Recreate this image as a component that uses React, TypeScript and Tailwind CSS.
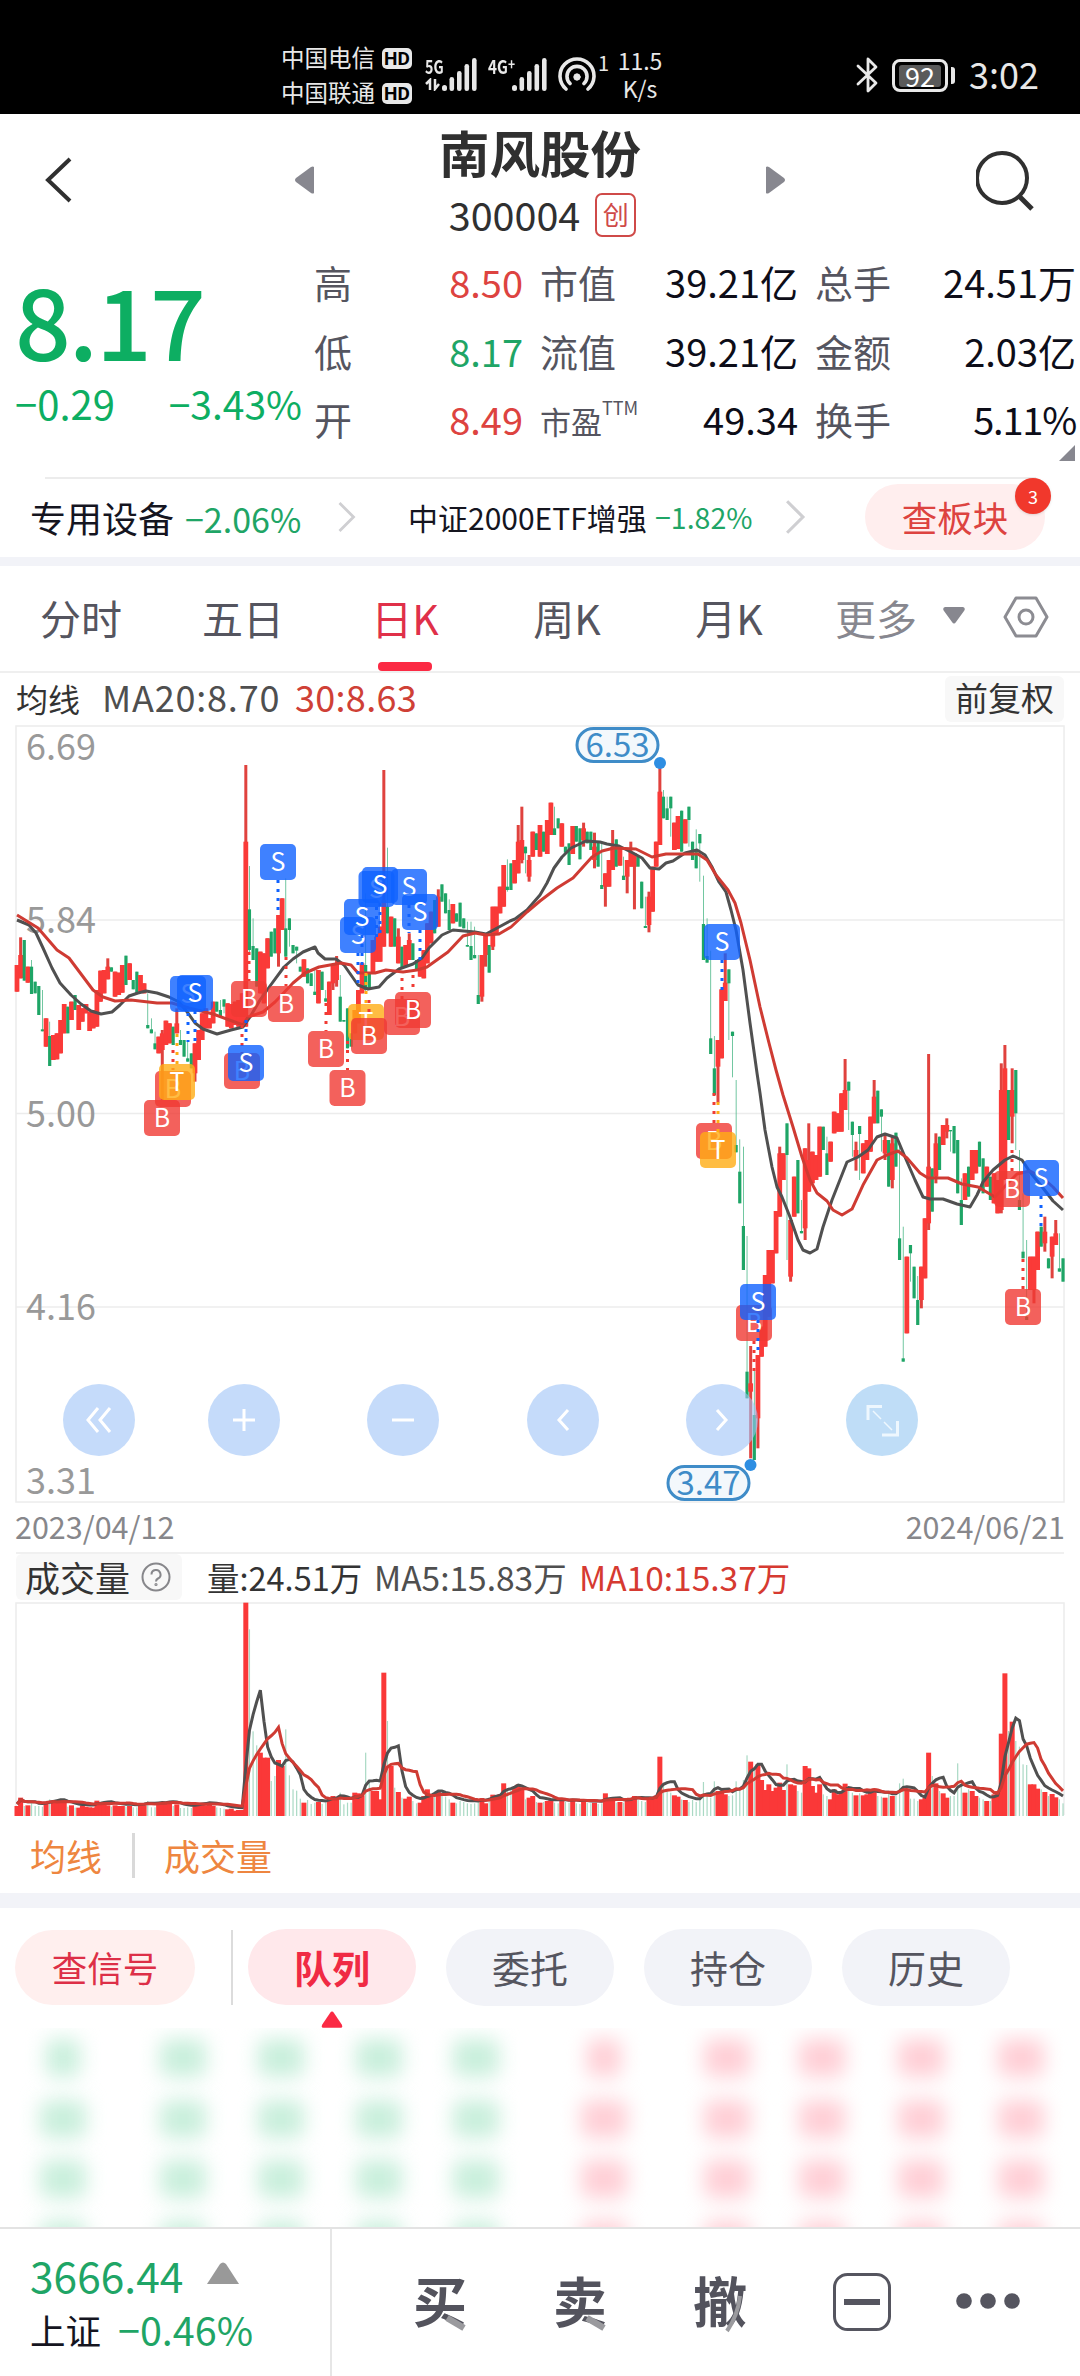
import React from 'react';
import { clsx } from 'clsx';

type Candle = { up: boolean; top: number; bottom: number; high: number; low: number };

// One entry per trading day: colour, body top, body bottom, then optional high and low.
// Values are thirds of a pixel, counted down from 25px above the price panel.
const CANDLE_DATA = `
r795 875,r765 835 712 835,g720 842,r800 848,g800 882 780 882,g845 880,g858 945,g988 994 870 994,r955 1040,g1008 1098 965 1098,
r1005 1080,r1000 1078,r960 1060,r912 1000,g920 1000,r905 960,g885 930,r915 990,r925 965,r912 940,
r935 993,r930 985,r870 980,r812 905,r810 880,r800 838 775 838,g802 815,r815 890,r818 885,r795 878,
g767 855,r790 840,g840 868,g815 880,r825 875,r850 880,g975 985 880 985,g988 1000 955 1000,g1030 1048 995 1048,r1010 1060,
r1000 1050 990 1200,r962 1035,r970 1030,g980 1035,r970 1000 925 1000,g1020 1035 990 1035,g1020 1070,g1075 1085 1020 1085,g1060 1105,r1030 1120 1030 1145,
r990 1080,r940 1020,r925 985,r955 985,r905 970,g905 935,g930 950 900 950,g898 920 898 940,r910 980,r912 985,
r905 975,r900 980,r880 980,r425 980 195 980,g628 750 498 760,g738 780 655 780,g745 860,r755 880,r760 910,r715 805,
g695 770,g685 760,r645 760 645 800,r595 690,g685 770 535 770,g655 690 655 740,g735 760,g740 752 740 790,g800 815,r778 830,
g805 850,g820 858,g875 885 805 885,r810 910,g815 870,g895 905 870 905,r845 945,r795 850 795 870,r790 840 768 860,g890 965 825 965,
g960 965,g925 1045,g1000 1040,r930 1000,r870 970,r790 880,g795 870 580 880,g820 865,r720 820,r710 785,
r680 785,r600 740 210 740,g620 700 443 700,r650 740,g655 740,r710 790 685 790,g740 805,r735 800,r720 780 700 780,g730 780,
g780 810,r780 830,r750 835,r670 790,r635 730,g600 700,r590 680 568 680,g553 605,g580 640,g630 690 598 690,
r612 670,g640 665,g608 680,g655 685,g735 740 665 740,g738 780 665 780,g765 775 680 775,g885 912 765 912,r765 890 765 905,r700 765 700 800,
g735 818,r620 740 620 750,r620 700,r560 640,r495 620,g560 570 478 575,g490 570,r480 550,r425 520 375 520,r420 480 320 490,
g440 460 440 520,r480 530 465 545,r395 470,g400 450,r375 470,g395 455,r360 462,r308 405,g385 405 320 405,g355 385,
r370 440,g440 458,g430 495,r378 462,g378 425,g385 478,r385 420 368 440,g395 430,g395 450,r440 480 398 505,
g425 500,g555 567 425 567,r520 560 520 620,r480 560,r440 510 390 510,g418 500,r440 497,g527 540 470 540,r480 530 480 580,r455 500 425 500,
r460 500 460 628,g470 500,g545 625,g678 684 590 684,r590 675 575 697,r500 635,r425 500,r275 435 195 435,g290 355 270 355,g325 360 290 360,
g290 325 290 410,r368 450,r348 447,g332 455,r358 430,g320 360 320 440,g425 480,g450 505 388 505,g402 430 402 545,g672 780 527 780,
g768 788 655 788,g1015 1062 752 1062,g1105 1185 1008 1185,r1020 1100 1020 1208,r868 1075,r848 903 760 903,g808 850 808 1020,g995 1008 995 1132,g1335 1357 1140 1357,g1415 1510 1318 1510,
g1578 1710 1340 1710,g2015 2095 1608 2095,r2050 2075 1938 2275,g2145 2280 2010 2280,r1965 2155 1965 2245,r1880 1970,r1725 1940,r1650 1850,r1650 1750,r1533 1660,
r1360 1550 1340 1550,r1360 1440,g1270 1365 1270 1680,r1560 1730 1560 1745,r1430 1550,g1380 1540,g1593 1600 1500 1600,r1345 1585 1345 1620,r1380 1475 1270 1475,r1355 1450,
r1365 1440,r1280 1430,g1280 1350,g1360 1425 1310 1425,r1325 1385,r1235 1300,r1240 1295,r1180 1295,r1170 1230 1077 1230,g1145 1172 1145 1290,
g1265 1305 1265 1370,r1350 1375 1325 1412,g1278 1302 1278 1440,r1330 1420,r1320 1380,r1250 1355,r1190 1270 1140 1270,g1172 1270,g1228 1250 1228 1355,r1320 1360 1300 1380,
g1320 1460,r1330 1440 1310 1465,g1298 1400,g1615 1680 1330 1680,g1975 1985 1580 1985,r1670 1900,g1635 1660 1635 1745,g1700 1795,g1800 1875 1728 1875,r1700 1800 1700 1825,
r1555 1735,r1400 1570 1062 1590,g1405 1535,r1330 1430 1300 1450,g1310 1410,r1275 1335,r1275 1295 1255 1315,g1290 1294 1290 1355,g1278 1360,g1320 1480,
g1500 1575 1435 1575,r1420 1500,g1400 1490,r1350 1440,r1350 1420,g1325 1400,g1375 1480,r1400 1460,g1430 1500,r1420 1510,
r1440 1540,r1170 1530 1090 1540,r1105 1440 1035 1440,g1170 1320,r1170 1250 1105 1330,g1110 1240 1110 1350,g1500 1530 1350 1530,g1655 1675 1480 1675,g1850 1860 1620 1860,r1670 1770,
r1670 1770 1670 1810,r1595 1710,g1580 1640,r1595 1630 1550 1655,g1675 1705,r1610 1670 1610 1735,r1600 1635 1560 1635,g1705 1715 1600 1715,g1675 1745`;

const CANDLES: Candle[] = CANDLE_DATA.replace(/\s*\n\s*/g, '')
  .split(',')
  .map((item) => {
    const [top, bottom, high, low] = item.slice(1).split(' ').map((v) => Number(v) / 3 - 25);
    return { up: item[0] === 'r', top, bottom, high: high ?? top, low: low ?? bottom };
  });

const VOLUMES = [
  30, 55, 30, 32, 38, 30, 30, 28, 38, 50, 42, 42, 40, 40, 28, 32, 25, 25, 32, 28,
  26, 25, 46, 38, 38, 32, 28, 32, 30, 30, 28, 30, 26, 26, 32, 32, 45, 26, 26, 38,
  38, 40, 38, 30, 35, 24, 24, 26, 24, 34, 32, 34, 32, 38, 30, 26, 24, 22, 20, 22,
  16, 18, 18, 640, 560, 254, 212, 190, 175, 175, 105, 120, 168, 150, 260, 122, 80, 76, 52, 40,
  48, 36, 40, 42, 36, 40, 55, 60, 50, 70, 35, 40, 40, 70, 68, 62, 190, 105, 75, 75,
  50, 430, 285, 150, 85, 72, 55, 52, 58, 45, 38, 40, 60, 80, 60, 70, 75, 60, 58, 50,
  40, 38, 45, 42, 38, 36, 38, 42, 54, 38, 48, 64, 62, 66, 98, 75, 80, 85, 95, 85,
  50, 55, 60, 42, 40, 42, 45, 48, 40, 38, 45, 42, 40, 45, 38, 36, 42, 40, 38, 40,
  36, 38, 68, 48, 45, 40, 42, 40, 45, 50, 60, 48, 45, 42, 50, 55, 62, 178, 100, 75,
  70, 62, 58, 50, 48, 42, 48, 42, 50, 102, 60, 55, 104, 75, 72, 65, 60, 62, 104, 85,
  108, 182, 163, 140, 155, 108, 78, 95, 75, 85, 100, 78, 155, 95, 92, 75, 70, 150, 143, 90,
  70, 95, 65, 60, 50, 80, 65, 70, 97, 85, 70, 62, 68, 62, 65, 70, 82, 60, 58, 55,
  70, 60, 60, 98, 112, 78, 52, 52, 45, 50, 55, 190, 120, 98, 75, 68, 55, 60, 60, 158,
  100, 70, 80, 75, 60, 55, 50, 45, 45, 65, 75, 247, 428, 255, 283, 225, 208, 155, 153, 95,
  95, 82, 80, 72, 60, 66, 56, 50, 38,
];

const MA20 =
  '17,920 29,925 36,933 43,948 52,968 60,983 71,995 81,1004 91,1011 101,1014 112,1012 120,1005 129,996 138,993 146,991 157,993 169,997 179,1002 188,1013 195,1023 203,1029 217,1034 231,1030 243,1027 250,1017 260,1000 270,986 284,967 293,959 303,952 315,947 318,953 325,959 336,959 344,965 351,975 358,985 368,989 379,987 387,978 399,969 413,964 422,958 429,948 442,935 453,930 475,932 486,934 499,927 510,921 515,919 527,910 540,895 547,883 554,868 562,857 571,848 586,841 600,842 607,844 619,846 633,853 642,858 650,868 659,869 666,863 673,861 685,853 697,850 705,855 712,867 719,882 726,892 731,910 736,930 743,970 750,1023 757,1073 760,1093 765,1130 772,1167 777,1187 782,1197 790,1217 798,1240 803,1250 810,1253 817,1249 823,1227 832,1200 847,1162 858,1157 868,1150 877,1137 885,1134 897,1138 905,1157 915,1180 923,1197 930,1199 943,1199 957,1204 970,1207 977,1195 983,1182 993,1170 1005,1160 1013,1156 1022,1160 1030,1172 1043,1188 1053,1201 1063,1210';

const MA30 =
  '17,915 38,928 57,950 69,958 93,990 103,997 115,1001 131,1000 157,1003 172,1003 189,1008 213,1014 243,1025 248,1017 263,1012 275,1002 293,983 305,973 319,967 341,963 351,965 358,973 375,973 386,970 403,972 417,970 427,967 448,952 463,936 475,933 486,935 499,934 511,927 527,912 540,901 557,888 573,878 592,857 602,851 614,848 636,849 652,857 666,854 678,854 698,854 707,860 716,875 728,890 735,903 741,923 750,960 760,1007 769,1043 776,1070 783,1095 793,1127 802,1157 810,1180 817,1193 827,1201 833,1210 842,1215 852,1209 863,1185 877,1160 887,1155 898,1151 907,1158 920,1173 928,1178 948,1178 962,1184 978,1187 995,1197 1008,1183 1017,1174 1030,1171 1043,1178 1053,1187 1063,1198';

type Marker = { kind: 'B' | 'S' | 'T'; x: number; y: number; from?: number; to?: number };

const MARKERS: Marker[] = [
  { kind: 'B', x: 162, y: 1118 },
  { kind: 'B', x: 173, y: 1089, from: 1050, to: 1070 },
  { kind: 'T', x: 177, y: 1082, from: 1034, to: 1064 },
  { kind: 'S', x: 188, y: 994, from: 1013, to: 1042 },
  { kind: 'S', x: 195, y: 993, from: 1011, to: 1042 },
  { kind: 'B', x: 242, y: 1071, from: 1025, to: 1053 },
  { kind: 'S', x: 246, y: 1063, from: 1020, to: 1045 },
  { kind: 'B', x: 249, y: 999, from: 952, to: 981 },
  { kind: 'S', x: 278, y: 862, from: 880, to: 910 },
  { kind: 'B', x: 286, y: 1004, from: 957, to: 986 },
  { kind: 'B', x: 326, y: 1049, from: 1003, to: 1031 },
  { kind: 'B', x: 347.5, y: 1088, from: 1041, to: 1070 },
  { kind: 'S', x: 358, y: 935, from: 953, to: 985 },
  { kind: 'S', x: 362, y: 917, from: 935, to: 965 },
  { kind: 'T', x: 366, y: 1022, from: 973, to: 1004 },
  { kind: 'B', x: 369, y: 1036, from: 1000, to: 1018 },
  { kind: 'S', x: 376.5, y: 889, from: 907, to: 940 },
  { kind: 'S', x: 409, y: 887, from: 905, to: 933 },
  { kind: 'S', x: 380, y: 885, from: 903, to: 933 },
  { kind: 'S', x: 420, y: 912, from: 930, to: 960 },
  { kind: 'B', x: 402, y: 1017, from: 978, to: 999 },
  { kind: 'B', x: 413, y: 1010, from: 975, to: 992 },
  { kind: 'S', x: 722, y: 942, from: 960, to: 990 },
  { kind: 'B', x: 714, y: 1141, from: 1093, to: 1123 },
  { kind: 'T', x: 718, y: 1150, from: 1102, to: 1132 },
  { kind: 'B', x: 754, y: 1323, from: 1341, to: 1372 },
  { kind: 'S', x: 758, y: 1302, from: 1320, to: 1350 },
  { kind: 'B', x: 1012, y: 1189, from: 1150, to: 1171 },
  { kind: 'B', x: 1023, y: 1307, from: 1259, to: 1289 },
  { kind: 'S', x: 1041, y: 1178, from: 1196, to: 1226 },
];

const MARKER_COLORS = { B: '#f03a33', S: '#0f62ff', T: '#ffad14' };
const RED = '#fa3a38';
const GREEN = '#1ea566';

const candleX = (i: number) => 17 + i * 3.632;

const movingAverage = (days: number) =>
  VOLUMES.map((_, i) => {
    const slice = VOLUMES.slice(Math.max(0, i - days + 1), i + 1);
    const avg = slice.reduce((a, b) => a + b, 0) / slice.length;
    return `${candleX(i)},${213 - (avg + 3) / 3}`;
  }).join(' ');

const SignalBars = () => (
  <svg width="36" height="34" viewBox="0 0 36 34" className="fill-[#e8e8e8]">
    <rect x="0" y="27" width="5" height="6" rx="2.5" />
    <rect x="7.5" y="19" width="4.600" height="14" rx="2.300" />
    <rect x="15" y="13" width="4.600" height="20" rx="2.300" />
    <rect x="22.5" y="6" width="4.600" height="27" rx="2.300" />
    <rect x="30" y="0" width="4.600" height="33" rx="2.300" />
  </svg>
);

const Carrier = ({ name }: { name: string }) => (
  <div className="flex h-[35px] items-center gap-[7px]">
    <span className="-mt-[3px] text-[23.5px] leading-[23px] whitespace-nowrap">{name}</span>
    <span className="flex h-[21px] w-[30px] items-center justify-center rounded-[5px] bg-[#e8e8e8] font-['Roboto',sans-serif] text-[19px] leading-[21px] font-bold text-black">
      HD
    </span>
  </div>
);

const StatusBar = () => (
  <div className="flex h-[114px] bg-black text-[#e8e8e8]">
    <div className="ml-[281px] w-[144px] pt-[41px]">
      <Carrier name="中国电信" />
      <Carrier name="中国联通" />
    </div>
    <div className="flex w-[63px] pt-[58px]">
      <div className="w-[17px]">
        <p className="origin-left scale-x-75 text-[19px] leading-[15px] font-bold">5G</p>
        <svg width="17" height="13" viewBox="0 0 17 13" className="mt-[5px] fill-none stroke-[#e8e8e8]" strokeWidth="2.500">
          <path d="M5 12V2L1 6M10 1v10l4-5" />
        </svg>
      </div>
      <SignalBars />
    </div>
    <div className="flex w-[70px] pt-[58px]">
      <p className="w-[24px] origin-left scale-x-80 text-[19px] leading-[15px] font-bold whitespace-nowrap">
        4G<span className="relative -top-1 text-[15px]">+</span>
      </p>
      <SignalBars />
    </div>
    <svg width="40" height="36" viewBox="0 0 40 36" className="mt-[57px] fill-none stroke-[#e8e8e8]" strokeWidth="3.600" strokeLinecap="round">
      <path d="M8 32a17 17 0 1 1 22 0M12 26.500a10 10 0 1 1 14 0" />
      <circle cx="19" cy="20" r="3.200" className="fill-[#e8e8e8]" strokeWidth="1" />
    </svg>
    <p className="mt-[54px] w-[18px] text-[20px] leading-[18px]">1</p>
    <div className="w-[48px] pt-[46px] text-center text-[23px] leading-[28px]">
      <p>11.5</p>
      <p>K/s</p>
    </div>
    <svg width="24" height="38" viewBox="0 0 24 38" className="mt-[56px] ml-[192px] fill-none stroke-[#e8e8e8]" strokeWidth="2.800" strokeLinejoin="round" strokeLinecap="round">
      <path d="M2 10 20 27l-8 8V3l8 8L2 28" />
    </svg>
    <div className="mt-[59px] ml-[12px] flex h-[33px] w-[56px] items-center justify-center rounded-[8px] border-[3px] border-[#e8e8e8]">
      <span className="flex h-[22px] w-[42px] items-center justify-center rounded-[3px] bg-[#5a5a5a] text-[27px] leading-[22px] text-white">
        92
      </span>
    </div>
    <span className="mt-[67px] ml-[3px] h-[17px] w-[4px] rounded-r-[3px] bg-[#e8e8e8]" />
    <p className="mt-[52px] ml-[14px] text-[36px] leading-[42px]">3:02</p>
  </div>
);

const TitleBar = () => (
  <div className="flex h-[138px] pl-[44px] text-[#303030]">
    <svg width="30" height="46" viewBox="0 0 30 46" className="mt-[43px] fill-none stroke-[#303030]" strokeWidth="4">
      <path d="M26 2 4 23l22 21" />
    </svg>
    <div className="ml-[221px] flex w-[490px] justify-between">
      <svg width="20" height="28" viewBox="0 0 20 28" className="mt-[52px] fill-[#87878f]">
        <path d="M19 1v26q-1 1-3 0L1 16q-2-2 0-4L16 1q2-1 3 0Z" />
      </svg>
      <div className="flex flex-col items-center">
        <h1 className="mt-[7px] text-[50.500px] leading-[60px] font-bold">南风股份</h1>
        <div className="mt-[5px] flex h-[58px] items-center gap-[15px] pl-[5px]">
          <span className="-mt-[3px] text-[39.500px] leading-[50px]">300004</span>
          <span className="flex h-[44px] w-[41px] items-center justify-center rounded-[7px] border-2 border-[#cf4a48] pb-[3px] text-[26px] leading-[30px] text-[#cf4a48]">
            创
          </span>
        </div>
      </div>
      <svg width="20" height="28" viewBox="0 0 20 28" className="mt-[52px] fill-[#87878f]">
        <path d="M1 1v26q1 1 3 0l15-11q2-2 0-4L4 1q-2-1-3 0Z" />
      </svg>
    </div>
    <svg width="60" height="62" viewBox="0 0 60 62" className="mt-[36px] ml-[191px] fill-none stroke-[#303030]" strokeWidth="4">
      <circle cx="26" cy="28" r="25" />
      <path d="m43 46 13 13" strokeWidth="5" />
    </svg>
  </div>
);

const STATS = [
  { a: '高', av: '8.50', up: true, b: '市值', bv: '39.21亿', c: '总手', cv: '24.51万' },
  { a: '低', av: '8.17', up: false, b: '流值', bv: '39.21亿', c: '金额', cv: '2.03亿' },
  { a: '开', av: '8.49', up: true, b: '市盈', bv: '49.34', c: '换手', cv: '5.11%' },
];

const Quote = () => (
  <section className="flex h-[225px]">
    <div className="w-[313px] pl-[15px] text-[#0dae62]">
      <p className="mt-[12px] h-[115px] text-[98px] leading-[108px] font-medium tracking-[-2px]">8.17</p>
      <div className="flex justify-between pr-[11px] text-[40px] leading-[48px] whitespace-nowrap">
        <span>−0.29</span>
        <span className="text-[39px]">−3.43%</span>
      </div>
    </div>
    <div className="-mt-[4px] w-[767px]">
      {STATS.map((row) => (
        <div key={row.a} className="grid h-[68.500px] grid-cols-[60px_150px_92px_183px_92px_186px] items-center text-[38px] leading-[60px] text-[#0d0d18]">
          <span className="pl-[1px] text-[#55555f]">{row.a}</span>
          <span className={clsx('text-right', row.up ? 'text-[#dd4340]' : 'text-[#1fa566]')}>{row.av}</span>
          <span className="pl-[17px] whitespace-nowrap text-[#55555f]">
            {row.b === '市盈' ? (
              <span className="text-[31px]">
                市盈<sup className="relative -top-[19px] text-[18px]">TTM</sup>
              </span>
            ) : (
              row.b
            )}
          </span>
          <span className="text-right">{row.bv}</span>
          <span className="pl-[17px] whitespace-nowrap text-[#55555f]">{row.c}</span>
          <span className={clsx('text-right whitespace-nowrap', row.cv === '5.11%' && 'tracking-[-1.200px]')}>{row.cv}</span>
        </div>
      ))}
      <svg width="16" height="16" viewBox="0 0 16 16" className="-mt-[9px] ml-[746px] fill-[#87878f]">
        <path d="M16 0v16H0Z" />
      </svg>
    </div>
  </section>
);

const Chevron = ({ w, h }: { w: number; h: number }) => (
  <svg width={w} height={h} viewBox="0 0 18 32" className="fill-none stroke-[#cfcfd2]" strokeWidth="2.800">
    <path d="m2 2 14 14L2 30" />
  </svg>
);

const Sectors = () => (
  <section className="relative flex h-[80px] items-center pl-[30px] text-[#15151f]">
    <span className="absolute top-0 left-[45px] h-[2px] w-[991px] bg-[#ececec]" />
    <span className="w-[155px] text-[36px] whitespace-nowrap">专用设备</span>
    <span className="mt-[2px] w-[152px] text-[34px] text-[#1fa566]">−2.06%</span>
    <Chevron w={19} h={32} />
    <span className="ml-[52px] w-[247px] text-[30px] whitespace-nowrap">中证2000ETF增强</span>
    <span className="mt-[1px] w-[129px] text-[28.500px] text-[#1fa566]">−1.82%</span>
    <Chevron w={22} h={36} />
    <button className="relative ml-[59px] h-[66px] w-[180px] rounded-full bg-[#ffeeee] pb-[1px] text-[35.500px] leading-[60px] text-[#dd4340]">
      查板块
      <span className="absolute -top-[6px] -right-[6px] flex size-[36px] items-center justify-center rounded-full bg-[#f1382c] text-[18px] leading-none text-white shadow-sm">
        3
      </span>
    </button>
  </section>
);

const TABS = ['分时', '五日', '日K', '周K', '月K'];

const PeriodTabs = () => (
  <nav className="flex h-[107px] border-b-2 border-[#efefef] text-[41px] text-[#55555f]">
    {TABS.map((tab) => (
      <div key={tab} className={clsx('flex w-[162px] flex-col items-center justify-between', tab === '日K' && 'text-[#e03049]')}>
        <span className="mt-[19px] leading-[64px]">{tab}</span>
        {tab === '日K' && <span className="h-[9px] w-[54px] rounded-[4px] bg-[#fb2a44]" />}
      </div>
    ))}
    <div className="mt-[19px] ml-[25px] flex h-[64px] items-center text-[#87878f]">
      <span className="w-[108px] leading-[64px]">更多</span>
      <svg width="22" height="17" viewBox="0 0 22 17" className="-mt-[3px] fill-[#87878f]">
        <path d="M2 0h18q3 1 1 4l-8 11q-2 3-4 0L1 4Q-1 1 2 0Z" />
      </svg>
      <svg width="46" height="42" viewBox="0 0 46 42" className="ml-[38px] fill-none stroke-[#8c8c92]" strokeWidth="3">
        <path d="M13 2h20l11 19-11 19H13L2 21Z" strokeLinejoin="round" />
        <circle cx="23" cy="21" r="7" />
      </svg>
    </div>
  </nav>
);

const Legend = () => (
  <div className="flex h-[52px] items-center pr-[16px] pl-[16px] text-[36px] leading-[46px] whitespace-nowrap text-[#4f4f4f]">
    <span className="w-[86px] pb-[3px] text-[32px] text-[#333]">均线</span>
    <span className="w-[193px] pb-[6px] tracking-[0.800px]">MA20:8.70</span>
    <span className="flex-1 pb-[6px] tracking-[0.300px] text-[#cf4036]">30:8.63</span>
    <span className="h-[46px] w-[119px] rounded-[6px] bg-[#f8f8f8] text-center text-[33px] leading-[43px] text-[#333]">前复权</span>
  </div>
);

const GRID = [195, 388.500, 582];
const AXIS = [
  { y: 35, label: '6.69' },
  { y: 208, label: '5.84' },
  { y: 402, label: '5.00' },
  { y: 595, label: '4.16' },
  { y: 769, label: '3.31' },
];

const ROUND_BUTTONS = [
  { x: 99, d: 'M-1-12l-10 12 10 12M11-12 1 0l10 12' },
  { x: 244, d: 'M-11 0h22M0-11v22' },
  { x: 403, d: 'M-11 0h22' },
  { x: 563, d: 'M5-10l-9 10 9 10' },
  { x: 722, d: 'M-5-10l9 10-9 10' },
];

const PriceChart = () => (
  <svg width="1080" height="778" viewBox="0 0 1080 778" className="block font-['Noto_Sans_CJK_SC',sans-serif]">
    <g className="fill-none stroke-[#ececec]" strokeWidth="1.500">
      <rect x="16" y="1" width="1048" height="776" />
      {GRID.map((y) => (
        <path key={y} d={`M16 ${y}h1048`} />
      ))}
    </g>
    <g className="fill-[#999]" fontSize="36">
      {AXIS.map((a) => (
        <text key={a.label} x="26" y={a.y}>
          {a.label}
        </text>
      ))}
    </g>
    {CANDLES.map((c, i) => (
      <g key={i} fill={c.up ? RED : GREEN}>
        <rect
          x={candleX(i) - (c.up ? 1.5 : 0.4)}
          y={c.high}
          width={c.up ? 3 : 0.8}
          height={c.low - c.high}
          fill={c.up ? '#e0423e' : '#4fb98a'}
        />
        <rect x={candleX(i) - (c.up ? 2.4 : 1.6)} y={c.top} width={c.up ? 4.8 : 3.2} height={c.bottom - c.top} />
      </g>
    ))}
    <g transform="translate(0 -725)">
      <polyline points={MA20} className="fill-none stroke-[#505050]" strokeWidth="3" strokeLinejoin="round" />
      <polyline points={MA30} className="fill-none stroke-[#cf3b33]" strokeWidth="3" strokeLinejoin="round" />
      {MARKERS.map((m, i) => (
        <g key={i}>
          {m.from && (
            <path d={`M${m.x} ${m.from}V${m.to}`} stroke={MARKER_COLORS[m.kind]} strokeWidth="3" strokeDasharray="3 6" />
          )}
          <rect x={m.x - 18} y={m.y - 18} width="36" height="36" rx="5" fill={MARKER_COLORS[m.kind]} opacity="0.8" />
          <text x={m.x} y={m.y + 9} textAnchor="middle" fontSize="25" className="fill-white">
            {m.kind}
          </text>
        </g>
      ))}
      {ROUND_BUTTONS.map((b) => (
        <g key={b.x} transform={`translate(${b.x} 1420)`}>
          <circle r="36" fill="#9fc3f7" opacity="0.6" />
          <path d={b.d} className="fill-none stroke-white" strokeWidth="3" />
        </g>
      ))}
      <g transform="translate(882 1420)">
        <circle r="36" fill="#94c6f2" opacity="0.6" />
        <path d="M-14 0v-13.500H0M0 15h15.500V1" className="fill-none stroke-[#eef7fe]" strokeWidth="3" />
        <path d="M-9-9-1-1M2 2l8 8" className="fill-none stroke-[#eef7fe]" strokeWidth="1.500" />
      </g>
      <g className="fill-[#f3f8fc] stroke-[#3f8cc8]" strokeWidth="3">
        <rect x="577" y="728.500" width="81" height="33" rx="16.500" />
        <rect x="668" y="1466.500" width="81" height="33" rx="16.500" />
      </g>
      <g className="fill-[#2e8ee2]">
        <circle cx="660" cy="763" r="6" />
        <circle cx="750.500" cy="1465" r="6" />
      </g>
      <g className="fill-[#3f8cc8]" fontSize="33" textAnchor="middle">
        <text x="617.500" y="757">6.53</text>
        <text x="708.500" y="1495">3.47</text>
      </g>
    </g>
  </svg>
);

const VolumeChart = () => (
  <svg width="1080" height="215" viewBox="0 0 1080 215" className="block">
    <path d="M16 213V1h1048v212" className="fill-none stroke-[#ececec]" strokeWidth="1.500" />
    {VOLUMES.map((v, i) => {
      const up = CANDLES[i]?.up;
      return (
        <rect
          key={i}
          x={candleX(i) - (up ? 2.5 : 0.6)}
          y={214 - v / 3}
          width={up ? 5 : 1.2}
          height={v / 3}
          fill={up ? '#fa3838' : '#a9d9c4'}
        />
      );
    })}
    <polyline points={movingAverage(5)} className="fill-none stroke-[#505050]" strokeWidth="3" />
    <polyline points={movingAverage(10)} className="fill-none stroke-[#cf3b33]" strokeWidth="3" />
  </svg>
);

const VolumeLegend = () => (
  <div className="mx-[16px] flex h-[50px] border-t-2 border-[#f0f0f0] text-[33.500px] leading-[46px] whitespace-nowrap text-[#4f4f4f]">
    <div className="flex h-[46px] w-[166px] items-center rounded-[6px] bg-[#f8f8f8] pl-[9px]">
      <span className="w-[116px] text-[35px] text-[#333]">成交量</span>
      <svg width="30" height="30" viewBox="0 0 30 30" className="fill-none stroke-[#87878b]" strokeWidth="2">
        <circle cx="15" cy="15" r="13.500" />
        <path d="M10.500 12.500a4.500 4.500 0 1 1 6.500 4q-2 1-2 3" />
        <circle cx="15" cy="22.500" r="0.600" />
      </svg>
    </div>
    <span className="ml-[25px] w-[167px] text-[32.500px] text-[#333]">量:24.51万</span>
    <span className="w-[205px]">MA5:15.83万</span>
    <span className="text-[#d63a31]">MA10:15.37万</span>
  </div>
);

const PILLS = ['队列', '委托', '持仓', '历史'];

const TradeTabs = () => (
  <div className="flex h-[120px] pt-[21px] pl-[15px] text-[38px]">
    <button className="mt-px h-[75px] w-[180px] rounded-full bg-[#ffefee] pb-[2px] text-[35.500px] text-[#dd2f47]">查信号</button>
    <span className="mt-px ml-[36px] h-[75px] w-[2px] bg-[#dcdcdc]" />
    <div className="ml-[15px] flex gap-[30px]">
      {PILLS.map((pill, i) => (
        <div key={pill} className="flex flex-col items-center">
          <button
            className={clsx(
              'h-[77px] w-[168px] rounded-full pb-[2px]',
              i === 0 ? 'bg-[#ffe8eb] font-bold text-[#f02a44]' : 'bg-[#f2f3f8] text-[#55555f]'
            )}
          >
            {pill}
          </button>
          {i === 0 && (
            <svg width="22" height="17" viewBox="0 0 22 17" className="mt-[6px] fill-[#fb2a44]">
              <path d="M9 2q2-3 4 0l8 12q1 3-1 3H2q-2 0-1-3Z" />
            </svg>
          )}
        </div>
      ))}
    </div>
  </div>
);

const Queue = () => (
  <div className="h-[199px] overflow-hidden">
    {[0, 1, 2, 3].map((row) => (
      <div key={row} className="grid h-[60.500px] grid-cols-[126px_114px_82px_114px_80px_176px_70px_120px_78px_122px] items-center justify-items-center">
        {Array.from({ length: 10 }, (_, col) => (
          <span
            key={col}
            className={clsx(
              'h-[38px] rounded-[8px] blur-[10px]',
              col % 5 === 0 && row === 0 ? 'w-[34px]' : 'w-[46px]',
              col < 5 ? 'bg-[#c9efdc]' : 'bg-[#ffcfd6]',
              col === 0 && row === 0 && 'bg-[#a5e3c5]',
              col === 5 && row === 0 && 'bg-[#ffb9c3]'
            )}
          />
        ))}
      </div>
    ))}
  </div>
);

const BottomBar = () => (
  <footer className="flex h-[149px] border-t-2 border-[#e3e3e3]">
    <div className="w-[332px] border-r-2 border-[#e6e6e6] pt-[19px] pl-[30px] text-[#1fa566]">
      <div className="flex h-[54px] items-center gap-[24px]">
        <span className="text-[42.500px] leading-[54px]">3666.44</span>
        <svg width="32" height="22" viewBox="0 0 32 22" className="-mt-[4px] fill-[#999]">
          <path d="M13 2q3-3 6 0l13 20H0Z" />
        </svg>
      </div>
      <div className="flex h-[54px] items-center">
        <span className="w-[88px] pt-[2px] text-[35.500px] leading-[54px] text-[#15151f]">上证</span>
        <span className="text-[39.500px] leading-[54px]">−0.46%</span>
      </div>
    </div>
    <div className="flex flex-1 items-center pl-[81px] text-[54px] font-bold text-[#53535d]">
      {['买', '卖', '撤'].map((label) => (
        <span key={label} className="relative -mt-[6px] w-[140px] leading-[70px]">
          {label}
          <svg width="24" height="40" viewBox="0 0 24 40" className="absolute top-[28px] left-[32px] fill-none stroke-[#9a9a9e]">
            {label === '撤' ? <path d="M15 3Q13 22 2 38" strokeWidth="4" /> : <path d="m2 25 17 10" strokeWidth="6.500" />}
          </svg>
        </span>
      ))}
      <svg width="58" height="58" viewBox="0 0 58 58" className="-mt-[2px] fill-none stroke-[#55555f]">
        <rect x="1.500" y="1.500" width="55" height="55" rx="13" strokeWidth="3" />
        <path d="M11 29h36" strokeWidth="6" />
      </svg>
      <svg width="68" height="18" viewBox="0 0 68 18" className="ml-[65px] -mt-[3px] fill-[#55555f]">
        <circle cx="8" cy="9" r="7.800" />
        <circle cx="32" cy="9" r="7.800" />
        <circle cx="56" cy="9" r="7.800" />
      </svg>
    </div>
  </footer>
);

const App: React.FC = () => {
  return (
    <div className="h-[2376px] w-[1080px] overflow-hidden bg-white font-['Noto_Sans_CJK_SC',sans-serif]">
      <StatusBar />
      <TitleBar />
      <Quote />
      <Sectors />
      <div className="h-[9px] bg-[#f2f3f8]" />
      <PeriodTabs />
      <Legend />
      <PriceChart />
      <div className="flex h-[49px] justify-between px-[15px] text-[30.500px] leading-[47px] text-[#87878b]">
        <span>2023/04/12</span>
        <span>2024/06/21</span>
      </div>
      <VolumeLegend />
      <VolumeChart />
      <div className="flex h-[76px] items-center pl-[30px] text-[36px] text-[#ee8640]">
        <span className="-mt-[1px] w-[102px]">均线</span>
        <span className="h-[45px] w-[3px] bg-[#d9d9d9]" />
        <span className="-mt-[1px] ml-[29px]">成交量</span>
      </div>
      <div className="h-[15px] bg-[#f2f3f8]" />
      <TradeTabs />
      <Queue />
      <BottomBar />
    </div>
  );
};

export default App;
